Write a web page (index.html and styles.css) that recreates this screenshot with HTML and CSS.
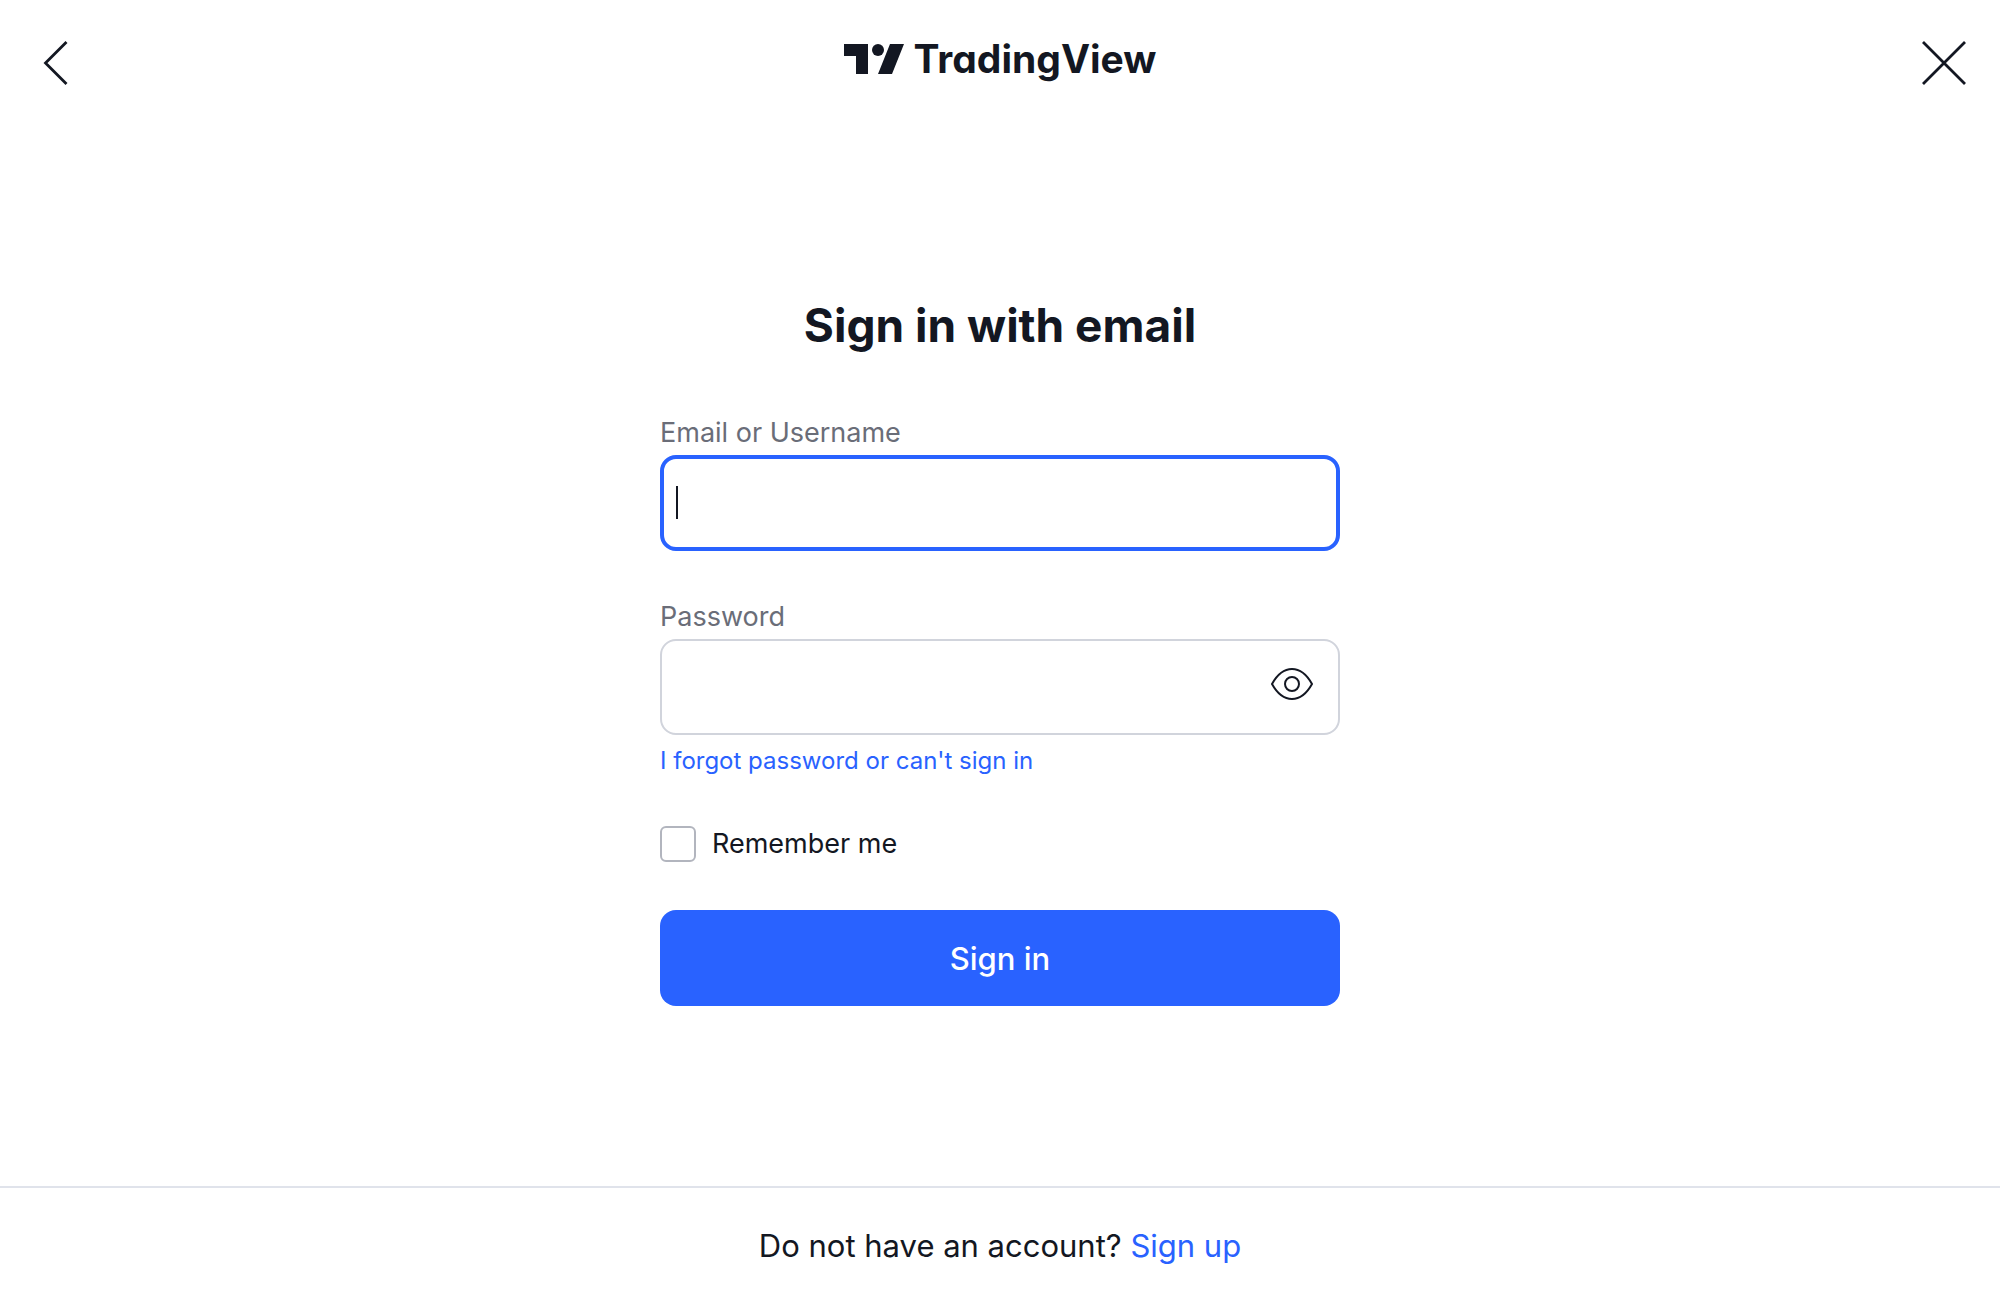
FILE: index.html
```
<!DOCTYPE html>
<html lang="en">
<head>
<meta charset="utf-8">
<meta name="viewport" content="width=device-width, initial-scale=1">
<title>Sign in</title>
<link rel="stylesheet" href="styles.css">
</head>
<body class="page">
<header class="header">
  <button class="icon-button" type="button" aria-label="Back">
    <svg width="44" height="44" viewBox="0 0 44 44" fill="none" stroke="currentColor" stroke-width="2.8"><path d="M24.5 1 3.5 22l21 21"/></svg>
  </button>
  <a class="logo" href="#">
    <svg width="60" height="30" viewBox="0 0 60 30" fill="currentColor" aria-hidden="true"><path d="M0 0h24v30H12V12H0zM46 0h14L48 30H34z"/><circle cx="34" cy="6" r="6"/></svg>
    <span class="logo-text">TradingView</span>
  </a>
  <button class="icon-button" type="button" aria-label="Close">
    <svg width="44" height="44" viewBox="0 0 44 44" fill="none" stroke="currentColor" stroke-width="2.8"><path d="m1 1 42 42M43 1 1 43"/></svg>
  </button>
</header>
<main class="main">
  <form class="form">
    <h1 class="title">Sign in with email</h1>
    <div class="field">
      <label class="label" for="username">Email or Username</label>
      <div class="box box-active">
        <input class="input" id="username" type="text" autocomplete="username">
        <span class="caret"></span>
      </div>
    </div>
    <div class="field">
      <label class="label" for="password">Password</label>
      <div class="box">
        <input class="input" id="password" type="password" autocomplete="current-password">
        <button class="reveal" type="button" aria-label="Show password">
          <svg width="56" height="56" viewBox="0 0 56 56" fill="none" stroke="currentColor" stroke-width="2"><path d="M8 25C13 16 20 10 28 10s15 6 20 15c-5 9-12 15-20 15S13 34 8 25z"/><circle cx="28" cy="25" r="7"/></svg>
        </button>
      </div>
      <a class="link forgot" href="#">I forgot password or can't sign in</a>
    </div>
    <label class="remember"><input class="checkbox" type="checkbox">Remember me</label>
    <button class="submit" type="submit">Sign in</button>
  </form>
</main>
<footer class="footer">
  <p class="footer-text">Do not have an account? <a class="link" href="#">Sign up</a></p>
</footer>
</body>
</html>
```
FILE: styles.css
```
* {
  box-sizing: border-box;
}

.page {
  display: flex;
  flex-direction: column;
  min-height: 100vh;
  margin: 0;
  background: #fff;
  color: #131722;
  font-family: Inter, "Liberation Sans", sans-serif;
}

.header {
  display: flex;
  justify-content: space-between;
  align-items: flex-start;
  padding: 35px 28px 24px 36px;
}

.icon-button,
.reveal {
  display: flex;
  align-items: center;
  justify-content: center;
  padding: 0;
  border: 0;
  background: none;
  color: inherit;
  cursor: pointer;
}

.icon-button {
  width: 56px;
  height: 56px;
}

.logo {
  display: flex;
  align-items: center;
  gap: 10px;
  height: 48px;
  padding-right: 8px;
  color: inherit;
  text-decoration: none;
}

.logo-text {
  font-size: 39px;
  font-weight: 700;
  line-height: 48px;
  font-feature-settings: "cv11";
}

.main {
  display: flex;
  flex: 1;
  align-items: center;
  justify-content: center;
}

.form {
  display: flex;
  flex-direction: column;
  gap: 48px;
  width: 100%;
  max-width: 680px;
}

.title {
  margin: 0 0 12px;
  font-size: 46px;
  font-weight: 700;
  line-height: 60px;
  text-align: center;
}

.field {
  display: flex;
  flex-direction: column;
  align-items: flex-start;
}

.label {
  margin-bottom: 4px;
  color: #6a6d78;
  font-size: 27px;
  line-height: 36px;
}

.box {
  position: relative;
  display: flex;
  align-items: center;
  width: 100%;
  height: 96px;
  padding-right: 18px;
  border: 2px solid #d1d4dc;
  border-radius: 16px;
}

.box-active {
  border: 4px solid #2962ff;
}

.input {
  flex: 1;
  min-width: 0;
  height: 100%;
  padding: 0 12px;
  border: 0;
  outline: 0;
  background: none;
  color: inherit;
  font: inherit;
  font-size: 27px;
}

.caret {
  position: absolute;
  top: 27px;
  left: 12px;
  width: 2px;
  height: 33px;
  background: #131722;
}

.input:focus + .caret {
  display: none;
}

.link {
  color: #2962ff;
  text-decoration: none;
}

.forgot {
  margin-top: 8px;
  font-size: 24px;
  line-height: 35px;
}

.remember {
  display: flex;
  align-items: center;
  gap: 16px;
  font-size: 27px;
  line-height: 36px;
}

.checkbox {
  width: 36px;
  height: 36px;
  margin: 0;
  appearance: none;
  border: 2px solid #b2b5be;
  border-radius: 6px;
}

.checkbox:checked {
  border-color: #2962ff;
  background: #2962ff;
}

.submit {
  height: 96px;
  border: 0;
  border-radius: 16px;
  background: #2962ff;
  color: #fff;
  font: inherit;
  font-size: 31px;
  font-weight: 500;
  cursor: pointer;
}

.footer {
  padding: 38px 24px 34px;
  border-top: 2px solid #e0e3eb;
}

.footer-text {
  margin: 0;
  font-size: 31px;
  line-height: 40px;
  text-align: center;
}
```
